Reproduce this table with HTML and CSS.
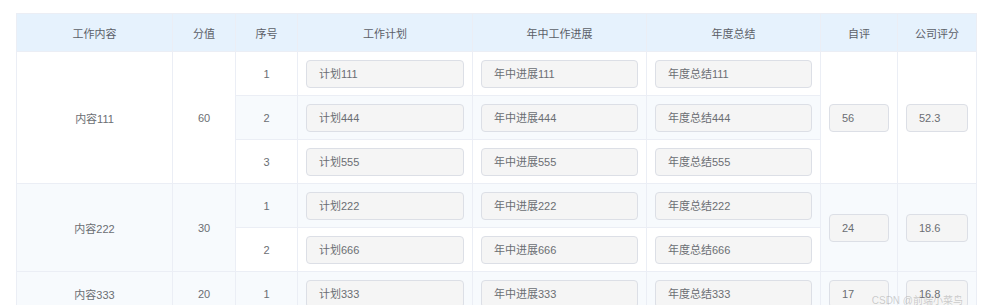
FILE: index.html
```html
<!DOCTYPE html>
<html lang="zh">
<head>
<meta charset="utf-8">
<link rel="stylesheet" href="styles.css">
</head>
<body>
<div class="page">
  <table class="grid">
    <colgroup>
      <col class="c1"><col class="c2"><col class="c3"><col class="c4"><col class="c5"><col class="c6"><col class="c7"><col class="c8">
    </colgroup>
    <thead>
      <tr class="head">
        <th>工作内容</th><th>分值</th><th>序号</th><th>工作计划</th><th>年中工作进展</th><th>年度总结</th><th>自评</th><th>公司评分</th>
      </tr>
    </thead>
    <tbody>
      <tr class="row">
        <td rowspan="3">内容111</td><td rowspan="3">60</td><td>1</td>
        <td class="in"><div class="field">计划111</div></td>
        <td class="in"><div class="field">年中进展111</div></td>
        <td class="in"><div class="field">年度总结111</div></td>
        <td rowspan="3" class="in"><div class="field">56</div></td>
        <td rowspan="3" class="in"><div class="field">52.3</div></td>
      </tr>
      <tr class="row stripe">
        <td>2</td>
        <td class="in"><div class="field">计划444</div></td>
        <td class="in"><div class="field">年中进展444</div></td>
        <td class="in"><div class="field">年度总结444</div></td>
      </tr>
      <tr class="row">
        <td>3</td>
        <td class="in"><div class="field">计划555</div></td>
        <td class="in"><div class="field">年中进展555</div></td>
        <td class="in"><div class="field">年度总结555</div></td>
      </tr>
      <tr class="row stripe">
        <td rowspan="2">内容222</td><td rowspan="2">30</td><td>1</td>
        <td class="in"><div class="field">计划222</div></td>
        <td class="in"><div class="field">年中进展222</div></td>
        <td class="in"><div class="field">年度总结222</div></td>
        <td rowspan="2" class="in"><div class="field">24</div></td>
        <td rowspan="2" class="in"><div class="field">18.6</div></td>
      </tr>
      <tr class="row">
        <td>2</td>
        <td class="in"><div class="field">计划666</div></td>
        <td class="in"><div class="field">年中进展666</div></td>
        <td class="in"><div class="field">年度总结666</div></td>
      </tr>
      <tr class="row stripe">
        <td>内容333</td><td>20</td><td>1</td>
        <td class="in"><div class="field">计划333</div></td>
        <td class="in"><div class="field">年中进展333</div></td>
        <td class="in"><div class="field">年度总结333</div></td>
        <td class="in"><div class="field">17</div></td>
        <td class="in"><div class="field">16.8</div></td>
      </tr>
    </tbody>
  </table>
  <div class="watermark">CSDN @前端小菜鸟</div>
</div>
</body>
</html>
```

FILE: styles.css
```css
html, body {
  margin: 0;
  padding: 0;
  background: #ffffff;
}
body {
  font-family: "Liberation Sans", "Noto Sans CJK SC", sans-serif;
  font-size: 11px;
  color: #6b6e73;
  overflow: hidden;
}
.page {
  position: relative;
  padding: 13px 5px 0 16px;
  height: 292px;
  overflow: hidden;
}
.grid {
  border-collapse: collapse;
  table-layout: fixed;
  width: 960px;
}
.c1 { width: 156px; }
.c2 { width: 63px; }
.c3 { width: 62px; }
.c4 { width: 175px; }
.c5 { width: 174px; }
.c6 { width: 174px; }
.c7 { width: 77px; }
.c8 { width: 79px; }
.grid th, .grid td {
  border: 1px solid #ebeef5;
  text-align: center;
  vertical-align: middle;
  padding: 0;
  font-weight: normal;
}
.head {
  height: 38px;
  background: #e6f2fd;
  color: #5c6068;
}
.row {
  height: 44px;
}
.stripe td {
  background: #f7fafd;
}
.grid td.in {
  padding: 0 8px;
  text-align: left;
}
.field {
  height: 26px;
  line-height: 26px;
  border: 1px solid #dcdfe6;
  border-radius: 4px;
  background: #f5f5f5;
  padding: 0 12px;
  color: #6b6e73;
  white-space: nowrap;
  overflow: hidden;
}
.watermark {
  position: absolute;
  right: 18px;
  top: 296px;
  font-size: 10px;
  line-height: 10px;
  color: rgba(120, 120, 120, 0.35);
}
```
